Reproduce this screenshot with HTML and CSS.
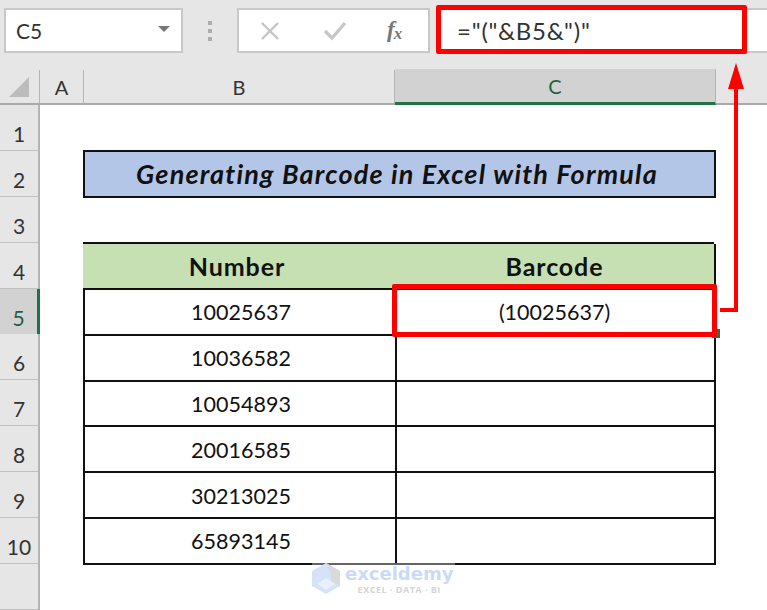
FILE: index.html
```html
<!DOCTYPE html>
<html lang="en">
<head>
    <meta charset="UTF-8">
    <title>Generating Barcode in Excel with Formula</title>
    <link rel="stylesheet" href="styles.css">
</head>
<body>
    <div class="toolbar">
        <div class="name-box">
            <span>C5</span>
            <i class="caret"></i>
        </div>
        <div class="grip"><i></i><i></i><i></i></div>
        <div class="fx-buttons">
            <svg width="20" height="18" viewBox="0 0 20 18"><path d="M2 1 L18 17 M18 1 L2 17" stroke="#c4c4c4" stroke-width="2.4" fill="none"/></svg>
            <svg width="24" height="20" viewBox="0 0 24 20"><path d="M2 10 L9 17 L22 2" stroke="#c8c8c8" stroke-width="3.4" fill="none"/></svg>
            <span class="fx">f<sub>x</sub></span>
        </div>
        <div class="formula">="("&amp;B5&amp;")"</div>
    </div>

    <div class="col-heads">
        <div class="corner"><i></i></div>
        <div class="col-a">A</div>
        <div class="col-b">B</div>
        <div class="col-c">C</div>
    </div>

    <div class="sheet">
        <div class="row-heads">
            <div>1</div>
            <div>2</div>
            <div>3</div>
            <div>4</div>
            <div class="active">5</div>
            <div>6</div>
            <div>7</div>
            <div>8</div>
            <div>9</div>
            <div>10</div>
            <div></div>
        </div>
        <div class="cells">
            <div class="title">Generating Barcode in Excel with Formula</div>
            <div class="data-table">
                <div class="th th-number">Number</div><div class="th">Barcode</div>
                <div class="num">10025637</div><div>(10025637)</div>
                <div class="num">10036582</div><div></div>
                <div class="num">10054893</div><div></div>
                <div class="num">20016585</div><div></div>
                <div class="num">30213025</div><div></div>
                <div class="num">65893145</div><div></div>
            </div>
        </div>
    </div>

    <!-- red callouts sit on top of the sheet -->
    <div class="fill-handle"></div>
    <div class="callout callout-formula"></div>
    <div class="callout callout-cell"></div>
    <svg class="arrow" width="40" height="260" viewBox="0 0 40 260">
        <path d="M2 249 H18 V24" stroke="#fe0000" stroke-width="4" fill="none"/>
        <path d="M18 2 L26 28 H10 Z" fill="#fe0000"/>
    </svg>

    <div class="watermark">
        <svg width="29" height="31" viewBox="0 0 29 31">
            <path d="M14 0 L28 8 V23 L14 31 L0 23 V8 Z" fill="#d6e2f8"/>
            <path d="M14 0 L28 8 V23 L19 18 V11 Z" fill="#d9d9d9"/>
            <path d="M14 15 L23 21 L14 27 L5 21 Z" fill="#e9f0fc"/>
        </svg>
        <div class="wm-text">
            <div class="wm-name">exceldemy</div>
            <div class="wm-sub">EXCEL · DATA · BI</div>
        </div>
    </div>
</body>
</html>
```

FILE: styles.css
```css
body {
    margin: 0;
    width: 767px;
    height: 610px;
    overflow: hidden;
    position: relative;
    background-color: white;
    font-family: Lato, "Liberation Sans", sans-serif;
    color: #111;
}

.toolbar {
    display: flex;
    align-items: flex-start;
    height: 62px;
    padding: 8px 0 0 4px;
    box-sizing: border-box;
    background-color: #e6e6e6;
}
.name-box {
    display: flex;
    align-items: center;
    justify-content: space-between;
    width: 179px;
    height: 45px;
    padding: 0 11px 0 10px;
    box-sizing: border-box;
    background-color: white;
    border: 2px solid #c8c8c8;
    font-size: 21px;
    color: #333;
}
.caret {
    width: 0;
    height: 0;
    margin-bottom: 4px;
    border: 6px solid transparent;
    border-top: 6px solid #777;
    border-bottom: 0;
}
.grip {
    display: flex;
    flex-direction: column;
    gap: 4px;
    width: 54px;
    padding-top: 13px;
    align-items: center;
}
.grip i {
    width: 4px;
    height: 4px;
    background-color: #adadad;
}
.fx-buttons {
    display: flex;
    align-items: center;
    width: 193px;
    height: 45px;
    padding-left: 21px;
    gap: 43px;
    box-sizing: border-box;
    background-color: white;
    border: 2px solid #c8c8c8;
}
.fx {
    font-family: "Liberation Serif", serif;
    font-style: italic;
    font-weight: bold;
    font-size: 23px;
    color: #777;
    margin-left: -3px;
    letter-spacing: -1px;
}
.fx sub {
    font-size: 17px;
    vertical-align: -2px;
}
.formula {
    flex: 1;
    height: 45px;
    line-height: 41px;
    margin-left: 7px;
    padding-left: 18px;
    box-sizing: border-box;
    background-color: white;
    border: 2px solid #c8c8c8;
    border-right: 0;
    font-size: 24px;
    letter-spacing: 0.8px;
    color: #333;
}

.col-heads {
    display: flex;
    height: 43px;
    background-color: #e6e6e6;
    border-bottom: 2px solid #a9a9a9;
    box-sizing: border-box;
    padding-top: 8px;
    font-size: 20px;
    color: #333;
}
.col-heads > div {
    display: flex;
    align-items: center;
    justify-content: center;
    box-sizing: border-box;
    border-right: 1px solid #b4b4b4;
}
.corner {
    width: 40px;
}
.corner i {
    width: 0;
    height: 0;
    margin: 0 0 0 -1px;
    border-left: 20px solid transparent;
    border-bottom: 20px solid #bcbcbc;
}
.col-a {
    width: 44px;
}
.col-b {
    width: 311px;
}
.col-c {
    width: 321px;
    margin-top: -1px;
    background-color: #d2d2d2;
    border-bottom: 3px solid #217346;
    margin-bottom: -2px;
    color: #1f5f46;
}

.sheet {
    display: flex;
}
.row-heads {
    width: 40px;
    box-sizing: border-box;
    background-color: #e6e6e6;
    border-right: 2px solid #b4b4b4;
    font-size: 21px;
    color: #333;
}
.row-heads div {
    display: flex;
    align-items: flex-end;
    justify-content: center;
    height: 45.9px;
    padding-bottom: 4px;
    box-sizing: border-box;
    border-bottom: 1px solid #c0c0c0;
}
.row-heads .active {
    background-color: #d2d2d2;
    color: #1f5f46;
    margin-right: -2px;
    border-right: 3px solid #217346;
    border-bottom: 0;
}
.cells {
    padding: 45px 0 0 43px;
}
.title {
    width: 633px;
    height: 48px;
    padding-right: 5px;
    box-sizing: border-box;
    background-color: #b4c6e7;
    border: 2px solid #111;
    font-size: 27px;
    font-weight: bold;
    font-style: italic;
    line-height: 43px;
    text-align: center;
    letter-spacing: 1.2px;
}
.data-table {
    display: grid;
    grid-template-columns: 312px 319px;
    grid-auto-rows: 45.85px;
    width: 631px;
    margin-top: 44px;
    box-sizing: border-box;
    border-top: 2px solid #111;
    border-left: 2px solid #111;
    font-size: 21.5px;
}
.data-table div {
    display: flex;
    align-items: center;
    justify-content: center;
    box-sizing: border-box;
    margin-left: -2px;
    padding-top: 1px;
    border-right: 2px solid #111;
    border-bottom: 2px solid #111;
}
.data-table .num {
    padding-left: 4px;
}
.data-table .th {
    padding-top: 0;
    background-color: #c6e0b4;
    font-size: 25px;
    font-weight: bold;
    letter-spacing: 0.9px;
}
.data-table .th-number {
    padding-right: 4px;
}

.callout {
    position: absolute;
    box-sizing: border-box;
    border: 5px solid #fe0000;
    border-radius: 2px;
}
.callout-formula {
    left: 436px;
    top: 5px;
    width: 311px;
    height: 49px;
}
.callout-cell {
    left: 392px;
    top: 284px;
    width: 325px;
    height: 53px;
}
.fill-handle {
    position: absolute;
    left: 712px;
    top: 329px;
    width: 8px;
    height: 9px;
    background-color: #217346;
}
.arrow {
    position: absolute;
    left: 718px;
    top: 61px;
}

.watermark {
    position: absolute;
    left: 312px;
    top: 563px;
    display: flex;
    gap: 4px;
    padding-right: 2px;
    background-color: rgba(255, 255, 255, 0.35);
}
.wm-name {
    font-family: "DejaVu Sans", sans-serif;
    font-size: 18px;
    font-weight: bold;
    line-height: 22px;
    color: #cbdaf6;
}
.wm-sub {
    font-family: "Open Sans", sans-serif;
    font-size: 9px;
    line-height: 9px;
    letter-spacing: 0.5px;
    text-align: center;
    color: #d4d4d4;
    font-weight: bold;
}
```
